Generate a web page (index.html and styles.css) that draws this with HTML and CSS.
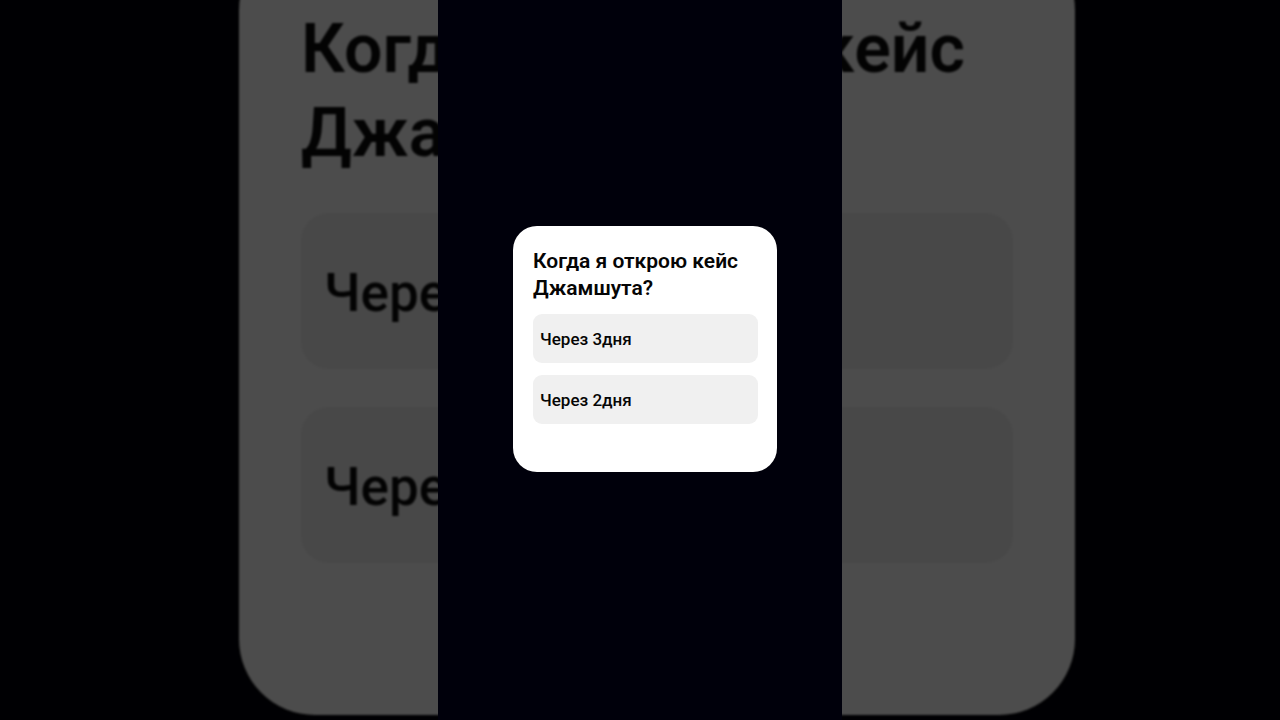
FILE: index.html
```html
<!DOCTYPE html>
<html lang="ru">
<head>
    <meta charset="UTF-8">
    <meta name="viewport" content="width=device-width, initial-scale=1.0">
    <title>Когда я открою кейс Джамшута?</title>
    <link rel="stylesheet" href="styles.css">
</head>
<body>
    <div class="stage">
        <!-- Enlarged dim copy behind the phone -->
        <div class="backdrop" aria-hidden="true">
            <div class="poll poll-large">
                <h2 class="question">Когда я открою кейс Джамшута?</h2>
                <div class="options">
                    <button class="option" type="button" tabindex="-1">Через 3дня</button>
                    <button class="option" type="button" tabindex="-1">Через 2дня</button>
                </div>
            </div>
        </div>

        <!-- Phone screen with the poll -->
        <main class="phone">
            <section class="poll">
                <h1 class="question">Когда я открою кейс Джамшута?</h1>
                <div class="options">
                    <button class="option" type="button">Через 3дня</button>
                    <button class="option" type="button">Через 2дня</button>
                </div>
            </section>
        </main>
    </div>
</body>
</html>
```
FILE: styles.css
```css
* {
    box-sizing: border-box;
}

body {
    margin: 0;
    background-color: #000003;
    font-family: Roboto, sans-serif;
}

/* Both layers share one grid cell */
.stage {
    display: grid;
    grid-template: 100vh / 1fr;
    justify-items: center;
    overflow: hidden;
}

.backdrop,
.phone {
    grid-area: 1 / 1;
    display: flex;
    justify-content: center;
    align-items: center;
}

.backdrop {
    width: 100%;
    padding: 0 0 72px 34px;
}

.phone {
    z-index: 1;
    aspect-ratio: 101 / 180;
    height: 100%;
    padding: 0 0 22px 10px;
    background-color: #00000b;
}

/* Poll card */
.poll {
    flex: none;
    width: 264px;
    padding: 22px 19px 48px 20px;
    border-radius: 24px;
    background-color: #fff;
    color: #050505;
}

.question {
    margin: 0 0 12px;
    font-size: 21px;
    font-weight: 650;
    line-height: 27px;
}

.options {
    display: grid;
    gap: 12px;
}

.option {
    height: 49px;
    padding: 0 7px;
    border: none;
    border-radius: 9px;
    background-color: #f0f0f0;
    color: inherit;
    font-family: inherit;
    font-size: 17px;
    font-weight: 500;
    text-align: left;
    cursor: pointer;
}

/* Large dim card */
.poll-large {
    width: 836px;
    padding: 73px 62px 152px;
    border-radius: 76px;
    background-color: #4c4c4c;
    color: #030303;
    filter: blur(1px);
}

.poll-large .question {
    margin-bottom: 38px;
    font-size: 68px;
    line-height: 84px;
}

.poll-large .options {
    gap: 38px;
}

.poll-large .option {
    height: 156px;
    padding: 4px 23px 0;
    border-radius: 28px;
    background-color: #484848;
    font-size: 53px;
}
```
